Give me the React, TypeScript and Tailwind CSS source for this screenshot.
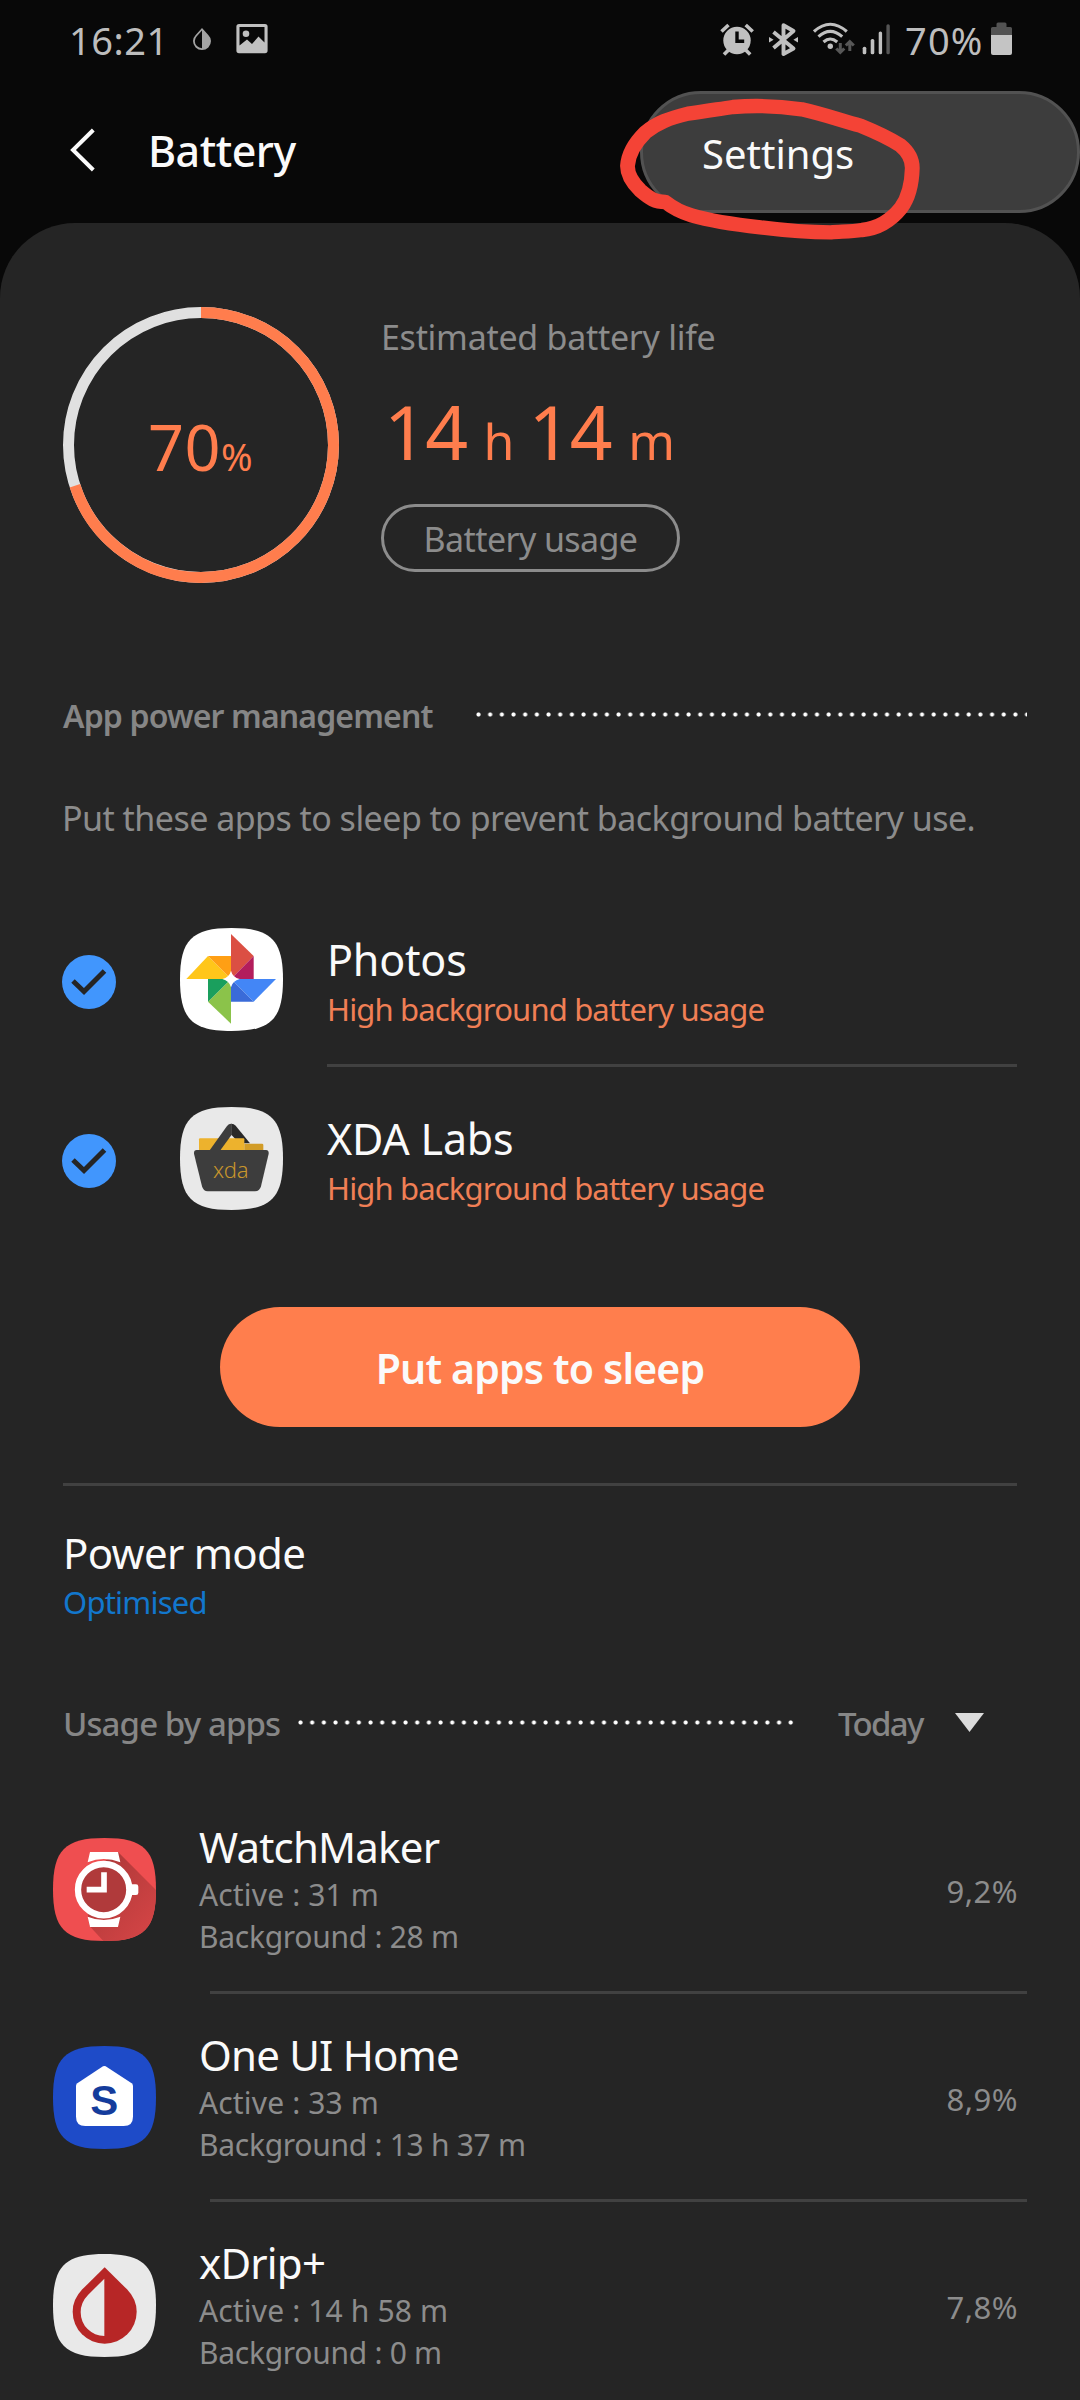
import React from "react";

const SQUIRCLE = "M0 51.5C0 12 12 0 51.5 0S103 12 103 51.5 91 103 51.5 103 0 91 0 51.5Z";

function StatusBar() {
  return (
    <div className="flex h-[78px] items-center pl-[69px] pr-[68px] text-[38px] leading-10 text-[#bdbdbd]">
      <span className="mt-px w-[124px] tracking-[0.5px]">16:21</span>
      <svg className="h-9 w-[18px]" viewBox="193 21 18 36">
        <path d="M202 28l6.3 6.9a9 9 0 0 1 2.7 6.2 9 9 0 0 1-18 0 9 9 0 0 1 2.7-6.2z" fill="#a3a3a3" />
        <path d="M202 30.5l-5.2 5.7a7 7 0 0 0-2 4.8 7.2 7.2 0 0 0 7.2 7.2z" fill="#080808" />
      </svg>
      <svg className="ml-[25px] h-9 w-8" viewBox="236 21 32 36">
        <path
          d="M239 24h26a2.6 2.6 0 0 1 2.6 2.6v24A2.6 2.6 0 0 1 265 53.200h-26a2.600 2.600 0 0 1-2.600-2.600v-24A2.600 2.600 0 0 1 239 24zm.5 3v18.500l7.500-6 5 4.500 6.500-7.500 6 6V27z"
          fill="#c0c0c0"
        />
        <circle cx="246" cy="33.800" r="3.300" fill="#c0c0c0" />
      </svg>
      <div className="ml-auto flex items-center">
        <svg className="h-9 w-[34px]" viewBox="720 21 34 36">
          <g fill="none" stroke="#c0c0c0">
            <path d="M721.500 31.500l7-6.500M752.700 31.500l-7-6.500" strokeWidth="3.600" />
            <path d="M728.500 50l-4.500 4.500M745.700 50l4.500 4.500" strokeWidth="3.600" />
          </g>
          <circle cx="737" cy="40.500" r="13.700" fill="#c0c0c0" />
          <path d="M737 31.500v9.700h7.200" fill="none" stroke="#080808" strokeWidth="3.400" />
        </svg>
        <svg className="ml-[14px] h-9 w-[31px]" viewBox="768 21 31 36">
          <g fill="none" stroke="#c0c0c0" strokeWidth="3.900">
            <path d="M773.500 32l20 16.500-10 5.500V25.200l10 5.800-20 17" strokeLinejoin="round" />
          </g>
          <path d="M769 37l4.600 2.700-4.600 2.700zM798 37l-4.600 2.700 4.600 2.700z" fill="#c0c0c0" />
        </svg>
        <svg className="ml-[14px] h-9 w-[42px]" viewBox="813 21 42 36">
          <g fill="none" stroke="#c0c0c0" strokeWidth="3.100">
            <path d="M814 31.500q16.200-14.500 32.800 0" />
            <path d="M818.500 36.700q11.700-10.800 23.700 0" />
            <path d="M823.500 42q6.700-6 13.700 0" />
          </g>
          <circle cx="830.300" cy="46.300" r="2.700" fill="#c0c0c0" />
          <path
            d="M840.300 43v9M836.300 48.500l4 4 4-4M849.800 51v-9M845.800 45.500l4-4 4 4"
            fill="none"
            stroke="#575757"
            strokeWidth="3"
          />
        </svg>
        <svg className="ml-[7px] h-9 w-7" viewBox="862 21 28 36">
          <g fill="#c0c0c0">
            <rect x="862.700" y="46.700" width="3.600" height="7.600" rx="1.600" />
            <rect x="870.700" y="39" width="3.600" height="15.300" rx="1.600" />
            <rect x="878.700" y="31.500" width="3.400" height="22.800" rx="1.600" />
            <rect x="886.400" y="24.300" width="3.400" height="30" rx="1.600" fill="#555555" />
          </g>
        </svg>
        <span className="ml-[15px] mt-px w-[86px] tracking-[1.2px]">70%</span>
        <svg className="h-9 w-[21px]" viewBox="991 21 21 36">
          <path d="M996.500 27v-3a1.500 1.500 0 0 1 1.500-1.500h7a1.500 1.500 0 0 1 1.500 1.500v3h4a1.500 1.500 0 0 1 1.500 1.500V36h-21v-7.500a1.500 1.500 0 0 1 1.500-1.500z" fill="#525252" />
          <path d="M991 35h21v18a2 2 0 0 1-2 2h-17a2 2 0 0 1-2-2z" fill="#c4c4c4" />
        </svg>
      </div>
    </div>
  );
}

function Header() {
  return (
    <div className="flex h-[145px] items-center pl-[70px] text-[#fafafa]">
      <svg className="-mt-[2px] h-[44px] w-[26px]" viewBox="0 0 26 44" fill="none">
        <path d="M23.300 2L3 22l20.300 20" stroke="#fafafa" strokeWidth="4" />
      </svg>
      <span className="ml-[52px] text-[43px] font-medium leading-[50px] tracking-[-0.500px]">Battery</span>
    </div>
  );
}

function SettingsPopup() {
  return (
    <>
      <div className="absolute left-[640px] top-[91px] flex h-[122px] w-[440px] items-center rounded-full border-[3px] border-[#525252] bg-[#3d3d3d] pl-[59px] pt-[3px] text-[40px] leading-[50px] text-[#fafafa]">
        Settings
      </div>
      <svg className="absolute left-[540px] top-0 h-[250px] w-[540px]" viewBox="0 0 1568 750" preserveAspectRatio="none" fill="none">
        <path
          d="M364 606C335 606 320 597 292 572C268 548 254 526 254 498C256 465 272 432 305 398C340 368 375 355 430 341C480 334 520 327 560 321C620 316 680 316 760 328C820 342 870 360 930 377C980 398 1010 412 1046 436C1072 458 1081 480 1081 504C1080 545 1074 588 1048 624C1020 660 985 685 935 690C900 696 870 694 845 697C770 697 700 690 640 682C570 674 500 664 440 646C410 637 385 623 364 606"
          stroke="#f44336"
          strokeWidth="43"
          strokeLinecap="round"
          strokeLinejoin="round"
        />
      </svg>
    </>
  );
}

function Overview() {
  const r = 132.5;
  const length = 2 * Math.PI * r;
  return (
    <div className="flex h-[471px] pl-[63px]">
      <div className="relative mt-[84px] h-[276px] w-[276px]">
        <svg className="h-full w-full -rotate-90" viewBox="0 0 276 276" fill="none">
          <circle cx="138" cy="138" r={r} stroke="#e0e0e0" strokeWidth="11" />
          <circle cx="138" cy="138" r={r} stroke="#ff7d4d" strokeWidth="11" strokeDasharray={`${length * 0.7} ${length}`} />
        </svg>
        <div className="absolute inset-0 flex items-baseline pl-[85px] pt-[100px] leading-[80px] text-[#ff7d4d]">
          <span className="text-[63px] tracking-[0.500px]">70</span>
          <span className="text-[38px]">%</span>
        </div>
      </div>
      <div className="ml-[42px] mt-[94px] flex flex-col items-start">
        <span className="text-[34px] leading-10 tracking-[-0.280px] text-[#8c8c8c]">Estimated battery life</span>
        <div className="ml-[3px] mt-[34px] flex h-[80px] items-baseline leading-[80px] text-[#ff7d4d]">
          <span className="text-[75px] font-[450] tracking-[-1.600px]">14</span>
          <span className="ml-[17px] text-[50px]">h</span>
          <span className="ml-[14px] text-[75px] font-[450] tracking-[-1.600px]">14</span>
          <span className="ml-[17px] text-[50px]">m</span>
        </div>
        <button className="mt-[33px] h-[68px] w-[299px] rounded-full border-[3px] border-[#8c8c8c] pt-px text-[34px] leading-10 tracking-[-0.600px] text-[#8c8c8c]">
          Battery usage
        </button>
      </div>
    </div>
  );
}

function PhotosIcon() {
  return (
    <svg className="h-[103px] w-[103px]" viewBox="0 0 103 103">
      <path d={SQUIRCLE} fill="#ffffff" />
      <g transform="scale(.33333) translate(-420 -84)">
        <path d="M573 102l68 66-68 69z" fill="#db4f43" />
        <path d="M641 168v69h-68z" fill="#b31d5c" />
        <path d="M573 237h135l-67 68z" fill="#4386f6" />
        <path d="M573 237l68 68h-68z" fill="#3a6bd8" />
        <path d="M573 237v134l-69-66z" fill="#8bc34a" />
        <path d="M504 237h69l-69 68z" fill="#1a9f5d" />
        <path d="M439 237l65-69 69 69z" fill="#ffc61a" />
        <path d="M504 168h69v69z" fill="#ff9f14" />
        <path d="M573 212q5 20 26 25-21 5-26 25-5-20-26-25 21-5 26-25z" fill="#ffffff" />
      </g>
    </svg>
  );
}

function XdaIcon() {
  return (
    <svg className="h-[103px] w-[103px]" viewBox="0 0 103 103">
      <path d={SQUIRCLE} fill="#e9e9e9" />
      <g transform="scale(.33333) translate(-420 -621)">
        <path d="M574 671q8 0 13 6l43 53h-32l-24-26z" fill="#292929" />
        <path d="M477 718q0-3 3-3h130q3 0 3 3v34H477z" fill="#edb22d" />
        <path d="M613 731h53q4 0 4 4v17h-57z" fill="#d29c27" />
        <path d="M508 752l53-74q6-8 14-7v33l-35 48z" fill="#3d3d3d" />
        <path d="M470 750h208q9 0 8 11l-23 98q-4 15-18 15H503q-13 0-17-15l-24-98q-1-11 8-11z" fill="#3d3d3d" />
        <text x="519" y="833" fontSize="66" fontWeight="300" fill="#c8962c" textLength="107" lengthAdjust="spacingAndGlyphs">
          xda
        </text>
      </g>
    </svg>
  );
}

function WatchIcon() {
  return (
    <svg className="h-[103px] w-[103px]" viewBox="0 0 103 103">
      <defs>
        <clipPath id="watch-clip">
          <path d={SQUIRCLE} />
        </clipPath>
        <linearGradient id="watch-shade" x1="0" y1="0" x2="1" y2="1">
          <stop offset="0.200" stopColor="#b03939" />
          <stop offset="0.850" stopColor="#d24445" />
        </linearGradient>
      </defs>
      <path d={SQUIRCLE} fill="#ef4e50" />
      <g clipPath="url(#watch-clip)">
        <g transform="scale(.33333) translate(-69 -114)">
          <path d="M265 157l125 125v150H228l-50-55-20-150z" fill="url(#watch-shade)" />
          <circle cx="221" cy="269" r="80" fill="#b03a3b" />
          <path d="M180 156h84l7 31q-50-20-98 0zM180 381h84l7-31q-50 20-98 0z" fill="#ffffff" />
          <circle cx="221" cy="269" r="77" fill="none" stroke="#ffffff" strokeWidth="19" />
          <path d="M300 253h18q7 0 7 7v18q0 7-7 7h-18z" fill="#ffffff" />
          <path d="M222 217v52h-52" fill="none" stroke="#ffffff" strokeWidth="17" />
        </g>
      </g>
    </svg>
  );
}

function HomeIcon() {
  return (
    <svg className="h-[103px] w-[103px]" viewBox="0 0 103 103">
      <path d={SQUIRCLE} fill="#1e4bc8" />
      <g transform="scale(.33333) translate(-69 -108)">
        <path d="M219 169q4-2 8 0l78 51q4 3 4 8v92q0 28-28 28H166q-28 0-28-28v-92q0-5 4-8z" fill="#ffffff" />
        <text x="223" y="315" textAnchor="middle" fontSize="126" fontWeight="700" fill="#143c9c" fontFamily="'Liberation Sans', sans-serif">
          S
        </text>
      </g>
    </svg>
  );
}

function DripIcon() {
  return (
    <svg className="h-[103px] w-[103px]" viewBox="0 0 103 103">
      <path d={SQUIRCLE} fill="#e9e9e9" />
      <g transform="scale(.33333) translate(-69 -101)">
        <path d="M224 141l67 66q29 30 29 67a96 96 0 0 1-192 0q0-37 29-67z" fill="#b72626" />
        <path d="M223 175v172a71 71 0 0 1-71-71q0-30 22-52z" fill="#e9e9e9" />
      </g>
    </svg>
  );
}

function CheckBadge() {
  return (
    <svg className="h-[54px] w-[54px]" viewBox="0 0 54 54" fill="none">
      <circle cx="27" cy="27" r="27" fill="#4196fd" />
      <path d="M11 26l11 10.500L42.500 16" stroke="#252525" strokeWidth="5" />
    </svg>
  );
}

function SleepRow({ name, icon, divider }: { name: string; icon: React.ReactNode; divider?: boolean }) {
  return (
    <div className="flex h-[179px] pl-[62px]">
      <div className="pt-[67px]">
        <CheckBadge />
      </div>
      <div className="ml-16 pt-10">{icon}</div>
      <div className={`ml-11 w-[690px] pt-[47px] ${divider ? "border-b-[3px] border-[#414141]" : ""}`}>
        <div className="text-[43px] leading-[50px] tracking-[-0.200px] text-[#fafafa]">{name}</div>
        <div className="text-[31px] leading-[48px] tracking-[-0.840px] text-[#f07f55]">High background battery usage</div>
      </div>
    </div>
  );
}

interface Usage {
  name: string;
  active: string;
  background: string;
  percent: string;
  icon: React.ReactNode;
}

const usages: Usage[] = [
  { name: "WatchMaker", active: "31 m", background: "28 m", percent: "9,2%", icon: <WatchIcon /> },
  { name: "One UI Home", active: "33 m", background: "13 h 37 m", percent: "8,9%", icon: <HomeIcon /> },
  { name: "xDrip+", active: "14 h 58 m", background: "0 m", percent: "7,8%", icon: <DripIcon /> },
];

function UsageRow({ item, divider }: { item: Usage; divider: boolean }) {
  return (
    <div className="h-[208px]">
      <div className="flex h-[205px] pl-[53px] pr-[62px]">
        <div className="pt-[52px]">{item.icon}</div>
        <div className="ml-[43px] pt-9 text-[30px] leading-[42px] text-[#8c8c8c]">
          <div className="mb-[2px] text-[42px] leading-[50px] tracking-[-0.800px] text-[#fafafa]">{item.name}</div>
          <div className="tracking-[0.150px]">Active : {item.active}</div>
          <div className="tracking-[-0.280px]">Background : {item.background}</div>
        </div>
        <div className="ml-auto pt-[84px] text-[31px] leading-[42px] tracking-[0.500px] text-[#8c8c8c]">{item.percent}</div>
      </div>
      {divider && <div className="ml-[210px] h-[3px] w-[817px] bg-[#414141]" />}
    </div>
  );
}

const dots = "h-[5px] bg-[radial-gradient(circle_at_2.500px_2.500px,#fff_1.600px,transparent_2.500px)] bg-[length:11.680px_5px] bg-repeat-x";

export default function App() {
  return (
    <div className="relative h-[2400px] w-[1080px] overflow-hidden bg-[#080808] font-['Noto_Sans',sans-serif]">
      <StatusBar />
      <Header />
      <main className="h-[2177px] overflow-hidden rounded-t-[75px] bg-[#252525]">
        <Overview />
        <div className="flex h-10 items-center pl-[63px]">
          <span className="mt-[3px] w-[413px] whitespace-nowrap text-[32px] font-semibold leading-10 tracking-[-0.850px] text-[#868686]">App power management</span>
          <div className={`w-[551px] ${dots}`} />
        </div>
        <p className="mb-[-1px] mt-16 whitespace-nowrap pl-[62px] text-[34px] leading-10 tracking-[-0.530px] text-[#8c8c8c]">
          Put these apps to sleep to prevent background battery use.
        </p>
        <div className="mt-[51px]">
          <SleepRow name="Photos" icon={<PhotosIcon />} divider />
          <SleepRow name="XDA Labs" icon={<XdaIcon />} />
        </div>
        <button className="mx-auto mt-[61px] block h-[120px] w-[640px] rounded-full bg-[#ff7e4d] pt-[2px] text-[41px] font-semibold leading-[50px] tracking-[-0.850px] text-[#fafafa]">
          Put apps to sleep
        </button>
        <div className="mx-[63px] mt-14 h-[3px] bg-[#414141]" />
        <div className="mt-[42px] pl-[63px]">
          <div className="text-[42px] leading-[50px] tracking-[-0.700px] text-[#fafafa]">Power mode</div>
          <div className="text-[31px] leading-[48px] tracking-[-0.790px] text-[#1277cd]">Optimised</div>
        </div>
        <div className="mt-[76px] flex h-10 items-center pl-[63px] text-[33px] font-medium leading-10 text-[#868686]">
          <span className="mt-[3px] w-[235px] whitespace-nowrap tracking-[-0.900px]">Usage by apps</span>
          <div className={`w-[497px] ${dots}`} />
          <span className="ml-[43px] mt-[3px] w-[117px] tracking-[-1.700px]">Today</span>
          <svg className="h-[19px] w-[29px]" viewBox="0 0 29 19">
            <path d="M0 0h29L14.500 19z" fill="#dcdcdc" />
          </svg>
        </div>
        <div className="mt-11">
          {usages.map((item, i) => (
            <UsageRow key={item.name} item={item} divider={i < usages.length - 1} />
          ))}
        </div>
      </main>
      <SettingsPopup />
    </div>
  );
}
